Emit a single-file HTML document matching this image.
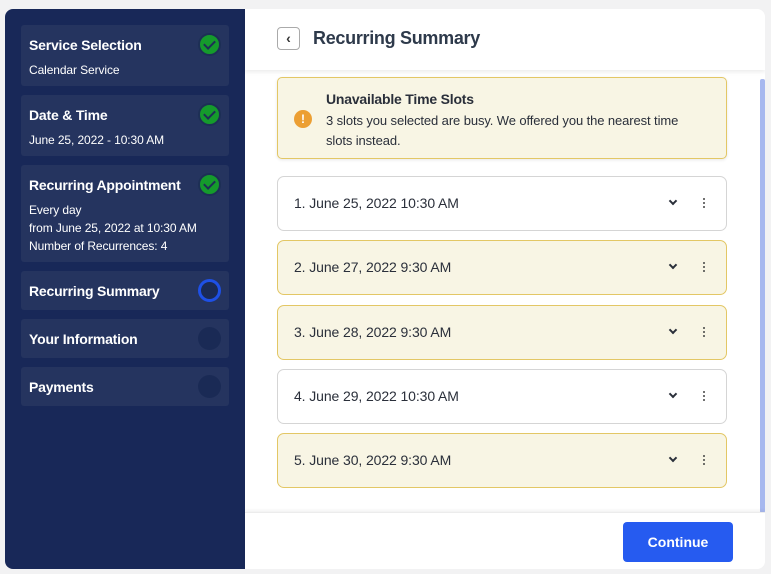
<!DOCTYPE html>
<html><head><style>
*{margin:0;padding:0;box-sizing:border-box}
body{width:771px;height:574px;background:#f2f2f3;font-family:"Liberation Sans",Roboto,sans-serif;position:relative;overflow:hidden}
.card{position:absolute;left:5px;top:9px;width:760px;height:560px;border-radius:8px;overflow:hidden;background:#fff}
.side{position:absolute;left:0;top:0;width:240px;height:560px;background:#182858}
.it{position:absolute;left:16px;width:208px;background:#25345f;border-radius:3px;color:#fff}
.it b{position:absolute;left:8px;top:12px;font-size:14px;font-weight:bold;letter-spacing:-0.2px}
.it p{position:absolute;left:8px;font-size:12px;line-height:18px;letter-spacing:-0.1px}
.c{position:absolute;left:177px;width:23px;height:23px;border-radius:50%}
.ok{background:#159b2c;border:2px solid #1d2f55}
.ok:after{content:"";position:absolute;left:6px;top:3px;width:5px;height:9px;border:solid #1d2f55;border-width:0 2px 2px 0;transform:rotate(45deg)}
.em{background:#1a2a55}
.cur{border:3px solid #1e50e6;background:#1a2a55}
.hdr{position:absolute;left:240px;top:0;width:520px;height:61px;background:#fff;box-shadow:0 2px 4px rgba(0,0,0,.08);z-index:2}
.back{position:absolute;left:32px;top:18px;width:23px;height:23px;border:1px solid #aaa;border-radius:4px;font-size:14px;text-align:center;line-height:20px;color:#333;font-weight:bold}
.hdr h1{position:absolute;left:68px;top:19px;font-size:18px;font-weight:bold;color:#2e3a4b;letter-spacing:-0.3px}
.alert{position:absolute;left:272px;top:68px;width:450px;height:82px;background:#f8f5e4;border:1px solid #e3c765;border-radius:5px;box-shadow:0 1px 3px rgba(0,0,0,.1)}
.alert .i{position:absolute;left:16px;top:32px;width:18px;height:18px;border-radius:50%;background:#ec9f33;color:#fff;font-size:12px;font-weight:bold;text-align:center;line-height:18px}
.alert b{position:absolute;left:48px;top:13px;font-size:14px;font-weight:bold;color:#2a2f3a;letter-spacing:-0.2px}
.alert p{position:absolute;left:48px;top:33px;font-size:13px;line-height:20px;color:#2a2f3a;width:380px;letter-spacing:-0.1px}
.slot{position:absolute;left:272px;width:450px;height:55px;border-radius:7px;font-size:14px;color:#2a2f3a}
.w{background:#fff;border:1px solid #d5d5d5}
.y{background:#f8f5e4;border:1px solid #e3c765}
.slot span{position:absolute;left:16px;top:18px;letter-spacing:-0.1px}
.slot .ch{position:absolute;left:392px;top:21px;width:6px;height:6px;border:solid #2a2f3a;border-width:0 2px 2px 0;transform:rotate(45deg)}
.slot .d{position:absolute;left:425px;width:2px;height:2px;border-radius:50%;background:#444}
.foot{position:absolute;left:240px;top:503px;width:520px;height:57px;background:#fff;border-top:1px solid #ececec;box-shadow:0 -2px 3px rgba(0,0,0,.05)}
.btn{position:absolute;left:378px;top:9px;width:110px;height:40px;background:#265bf0;border-radius:4px;color:#fff;font-size:14px;font-weight:bold;text-align:center;line-height:40px}
.sb{position:absolute;left:755px;top:70px;width:5px;height:434px;background:#a7b8ef;border-radius:2px}
</style></head><body>
<div class="card">
<div class="side">
<div class="it" style="top:16px;height:61px"><b>Service Selection</b><p style="top:36px">Calendar Service</p><div class="c ok" style="top:8px"></div></div>
<div class="it" style="top:86px;height:61px"><b>Date &amp; Time</b><p style="top:36px">June 25, 2022 - 10:30 AM</p><div class="c ok" style="top:8px"></div></div>
<div class="it" style="top:156px;height:97px"><b>Recurring Appointment</b><p style="top:36px">Every day<br>from June 25, 2022 at 10:30 AM<br>Number of Recurrences: 4</p><div class="c ok" style="top:8px"></div></div>
<div class="it" style="top:262px;height:39px"><b>Recurring Summary</b><div class="c cur" style="top:8px"></div></div>
<div class="it" style="top:310px;height:39px"><b>Your Information</b><div class="c em" style="top:8px"></div></div>
<div class="it" style="top:358px;height:39px"><b>Payments</b><div class="c em" style="top:8px"></div></div>
</div>
<div class="hdr"><div class="back">‹</div><h1>Recurring Summary</h1></div>
<div class="sb"></div>
<div class="alert"><div class="i">!</div><b>Unavailable Time Slots</b><p>3 slots you selected are busy. We offered you the nearest time slots instead.</p></div>
<div class="slot w" style="top:167px"><span>1. June 25, 2022 10:30 AM</span><i class="ch"></i><i class="d" style="top:21px"></i><i class="d" style="top:25px"></i><i class="d" style="top:29px"></i></div>
<div class="slot y" style="top:231px"><span>2. June 27, 2022 9:30 AM</span><i class="ch"></i><i class="d" style="top:21px"></i><i class="d" style="top:25px"></i><i class="d" style="top:29px"></i></div>
<div class="slot y" style="top:296px"><span>3. June 28, 2022 9:30 AM</span><i class="ch"></i><i class="d" style="top:21px"></i><i class="d" style="top:25px"></i><i class="d" style="top:29px"></i></div>
<div class="slot w" style="top:360px"><span>4. June 29, 2022 10:30 AM</span><i class="ch"></i><i class="d" style="top:21px"></i><i class="d" style="top:25px"></i><i class="d" style="top:29px"></i></div>
<div class="slot y" style="top:424px"><span>5. June 30, 2022 9:30 AM</span><i class="ch"></i><i class="d" style="top:21px"></i><i class="d" style="top:25px"></i><i class="d" style="top:29px"></i></div>
<div class="foot"><div class="btn">Continue</div></div>
</div>
</body></html>
